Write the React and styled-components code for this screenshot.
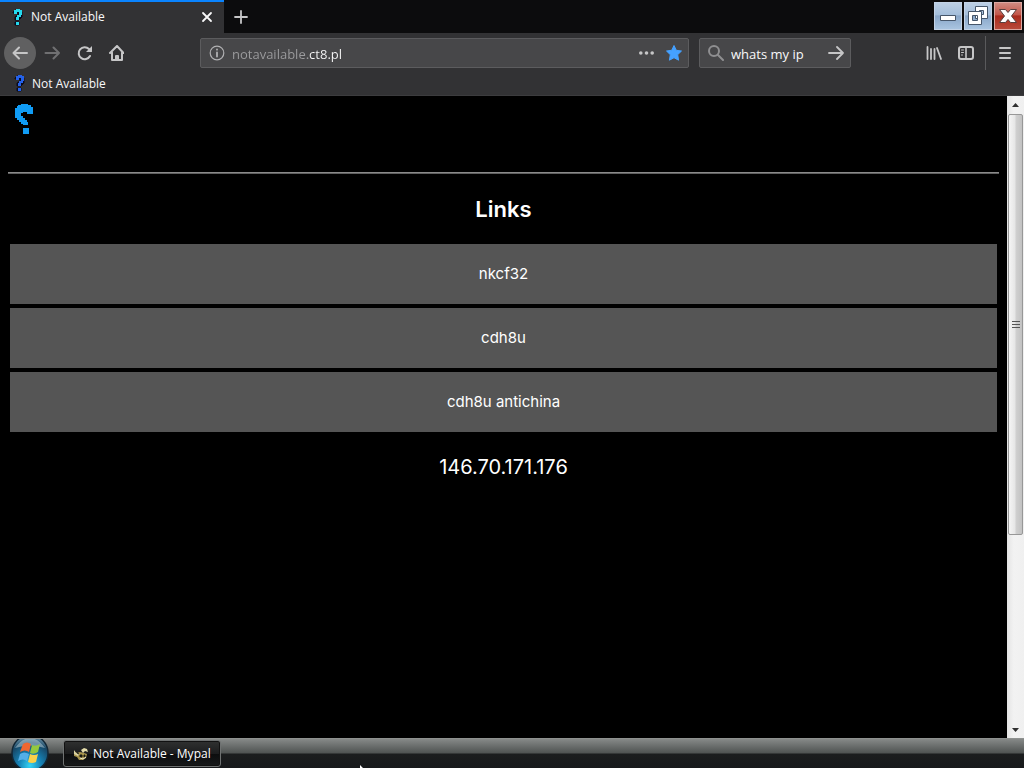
import React, { useState } from 'react';
import styled, { createGlobalStyle } from 'styled-components';

const GlobalStyle = createGlobalStyle`
  * {
    box-sizing: border-box;
  }

  body {
    margin: 0;
    background: #000;
    font-family: 'Open Sans', 'Noto Sans', sans-serif;
    font-size: 12px;
  }

  button,
  input {
    font-family: inherit;
  }
`;

const Desktop = styled.div`
  position: relative;
  display: flex;
  flex-direction: column;
  height: 100vh;
  overflow: hidden;
`;

const TabStrip = styled.header`
  display: flex;
  flex: none;
  height: 33px;
  background: #0c0c0d;
`;

const Tab = styled.div`
  display: flex;
  align-items: center;
  width: 224px;
  padding: 0 9px 2px;
  gap: 4px;
  border-top: 2px solid #0a84ff;
  background: #323234;
  color: #f9f9fa;
`;

const TabTitle = styled.span`
  flex: 1;
`;

const IconButton = styled.button`
  display: flex;
  flex: none;
  align-items: center;
  justify-content: center;
  width: ${(props) => props.$size || 32}px;
  height: ${(props) => props.$size || 32}px;
  padding: 0;
  border: 0;
  border-radius: ${(props) => (props.$round ? '50%' : '2px')};
  background: ${(props) => (props.$round ? '#606061' : 'transparent')};
  color: ${(props) => (props.disabled ? '#707072' : '#c6c6c7')};
`;

const WindowButtons = styled.div`
  display: flex;
  gap: 2px;
  margin-left: auto;
  padding: 2px 2px 0 0;
`;

const WindowButton = styled.button`
  display: flex;
  align-items: center;
  justify-content: center;
  width: 28px;
  height: 28px;
  padding: 0;
  border: 1px solid ${(props) => (props.$close ? '#dba8a2' : '#c3d3e6')};
  background: ${(props) =>
    props.$close
      ? 'linear-gradient(#cf8a80, #c2574a 45%, #a92a1c 50%, #b84a3a)'
      : 'linear-gradient(#bccfe4, #a4bedb 45%, #88a6c8 50%, #a9c4e0)'};
`;

const Toolbar = styled.nav`
  display: flex;
  flex: none;
  align-items: center;
  height: 40px;
  padding: 0 3px 0 4px;
  background: #323234;
`;

const Field = styled.form`
  display: flex;
  align-items: center;
  flex: ${(props) => props.$grow || 'none'};
  min-width: 0;
  height: 30px;
  padding: 0 6px 0 8px;
  gap: 7px;
  border: 1px solid #5c5c5e;
  border-radius: 2px;
  background: #474749;
  color: #b1b1b3;
`;

const TextInput = styled.input`
  flex: 1;
  min-width: 0;
  height: 28px;
  padding: 2px 0 0;
  border: 0;
  outline: 0;
  background: none;
  color: #f9f9fa;
  font-size: 13px;
`;

// the host is dimmed, the registered domain stays bright
const AddressInput = styled(TextInput)`
  background: linear-gradient(90deg, #9c9c9e 76px, #f9f9fa 76px);
  background-clip: text;
  color: transparent;
`;

const AddressArea = styled.div`
  display: flex;
  flex: 1;
  min-width: 0;
  gap: 10px;
  padding: 0 67px 0 68px;
`;

const Divider = styled.span`
  width: 1px;
  height: 34px;
  margin: 0 3px;
  background: #5a5a5c;
`;

const Bookmarks = styled.nav`
  display: flex;
  flex: none;
  align-items: center;
  height: 23px;
  padding: 0 11px 2px;
  border-bottom: 1px solid #3c3c3e;
  background: #323234;
`;

const Bookmark = styled.a`
  display: flex;
  align-items: center;
  gap: 3px;
  color: #f9f9fa;
  text-decoration: none;
`;

const Viewport = styled.div`
  display: flex;
  flex: 1;
  min-height: 0;
`;

const Page = styled.main`
  flex: 1;
  padding: 8px;
  background: #000;
  color: #fff;
  font-family: Inter, sans-serif;
  text-align: center;
`;

const PageHeader = styled.div`
  display: flex;
  height: 68px;
  padding-left: 7px;
`;

const Rule = styled.hr`
  height: 2px;
  margin: 0;
  border: 0;
  border-top: 1px solid #8a8a8a;
  background: #5f5f5f;
`;

const Heading = styled.h2`
  margin: 20px 0;
  font-size: 22px;
  font-weight: 600;
  line-height: 30px;
`;

const LinkList = styled.div`
  display: grid;
  gap: 4px;
  padding: 0 2px;
`;

const PageLink = styled.a`
  background: #555;
  color: #fff;
  font-size: 15px;
  line-height: 60px;
  text-decoration: none;
`;

const Address = styled.p`
  margin: 20px 0;
  font-size: 20px;
  line-height: 30px;
`;

const Scrollbar = styled.div`
  display: flex;
  flex: none;
  flex-direction: column;
  width: 17px;
  background: linear-gradient(90deg, #e4e4e4, #f2f2f2 40%, #f0f0f0);
`;

const ScrollButton = styled.button`
  display: flex;
  align-items: center;
  justify-content: center;
  height: 17px;
  padding: 0;
  border: 0;
  background: none;
`;

const Track = styled.div`
  flex: 1;
  padding: 1px;
`;

const Thumb = styled.div`
  display: flex;
  align-items: center;
  justify-content: center;
  height: calc(70% - 3px);
  border: 1px solid #979797;
  border-radius: 2px;
  background: linear-gradient(90deg, #f5f5f5, #e6e6e6 45%, #cfcfcf 55%, #c2c2c2);
`;

const Taskbar = styled.footer`
  display: flex;
  flex: none;
  align-items: flex-start;
  gap: 14px;
  height: 30px;
  padding-left: 11px;
  border-top: 1px solid #8e918f;
  background: linear-gradient(#868988, #4f5352 14px, #1b1d1e 15px, #17191b);
`;

const StartButton = styled.button`
  width: 38px;
  height: 29px;
  padding: 0;
  border: 0;
  overflow: hidden;
  background: none;
`;

const TaskButton = styled.button`
  display: flex;
  align-items: center;
  gap: 4px;
  height: 27px;
  width: 158px;
  margin-top: 1px;
  padding: 0 0 0 9px;
  border: 1px solid #6f7272;
  border-radius: 3px;
  background: linear-gradient(#303131, #1c1d1e 50%, #0c0d0e 52%, #17191a);
  box-shadow: inset 0 0 0 1px #111;
  color: #fff;
  font-size: 12px;
  white-space: nowrap;
`;

const Pointer = styled.svg`
  position: absolute;
  top: 765px;
  left: 360px;
`;

function QuestionMark({ width, height, color }) {
  return (
    <svg width={width} height={height} viewBox='0 0 18 30' preserveAspectRatio='none'>
      <path
        fill={color}
        d='M3 1h3V0h7v1h3v2h2v7h-6V8H8v1H6v3h2v2h2v2h2v2h1v3H8v-1H6v-2H4v-2H2v-2H0V4h2V2h1zM8 24h6v6H8z'
      />
    </svg>
  );
}

function TabMark({ color }) {
  return (
    <svg width='18' height='18' viewBox='0 0 18 18'>
      <path
        d='M4 4l2-2h5l2 2v5l-3 3H6V9l3-2V5H4zM6 14h4v3H6z'
        fill='#0b0b1c'
        stroke='#0b0b1c'
        strokeWidth='1'
      />
      <path d='M5 2h2V1h4v1h2v5h-1v2h-2v3H7V9h1V7h2V4H8v2H5zM7 14h3v3H7z' fill={color} />
    </svg>
  );
}

function Stroke({ size = 16, width = 2, children }) {
  return (
    <svg
      width={size}
      height={size}
      viewBox='0 0 16 16'
      fill='none'
      stroke='currentColor'
      strokeWidth={width}
      strokeLinecap='round'
      strokeLinejoin='round'
    >
      {children}
    </svg>
  );
}

function StartOrb() {
  return (
    <svg width='38' height='29' viewBox='0 0 38 29'>
      <defs>
        <radialGradient id='orb' cx='50%' cy='85%' r='85%'>
          <stop offset='0' stopColor='#35d4f4' />
          <stop offset='.35' stopColor='#1685b9' />
          <stop offset='.75' stopColor='#174665' />
          <stop offset='1' stopColor='#7fa5b8' />
        </radialGradient>
      </defs>
      <circle cx='19' cy='14' r='18' fill='url(#orb)' stroke='#122736' strokeWidth='1.5' />
      <path d='M4 9Q19-11 34 9Q19 4 4 9z' fill='#b7ced9' opacity='.55' />
      <path d='M12 5q4-3 8 0l-2 8q-4-3-9 0z' fill='#ee6631' />
      <path d='M21 6q4 2 8-1l-2 8q-4 3-8 1z' fill='#94c83e' />
      <path d='M9 15q4-3 9 0l-2 7q-4-3-9 0z' fill='#54aee8' />
      <path d='M19 15q4 2 8 0l-2 8q-4 2-8 0z' fill='#fbd04a' />
    </svg>
  );
}

function MypalIcon() {
  return (
    <svg width='16' height='14' viewBox='0 0 16 14'>
      <path d='M1 4l3 2 3-1 4 1 3 1-1 4-3 2H6l-2-3-3-1z' fill='#a8954c' />
      <path d='M8 3l3-2 3 1 1 3-3-1-2 2z' fill='#e3dba9' />
      <path d='M1 3l2 3 3 1-1 2-4-2z' fill='#d9d2a4' />
      <path d='M7 8h2v2H7zM11 8h1v2h-1zM4 6l2 1' fill='#1a1a12' stroke='#1a1a12' />
      <path d='M7 11l3 1 3-2' stroke='#f2ecc8' fill='none' />
    </svg>
  );
}

const links = ['nkcf32', 'cdh8u', 'cdh8u antichina'];

function App() {
  const [url, setUrl] = useState('notavailable.ct8.pl');
  const [search, setSearch] = useState('whats my ip');

  return (
    <>
      <GlobalStyle />
      <Desktop>
        <TabStrip>
          <Tab>
            <TabMark color='#24d9ee' />
            <TabTitle>Not Available</TabTitle>
            <IconButton $size={16} aria-label='Close tab'>
              <Stroke>
                <path d='M4 4l8 8M12 4l-8 8' stroke='#f9f9fa' strokeWidth='1.8' />
              </Stroke>
            </IconButton>
          </Tab>
          <IconButton $size={33} aria-label='New tab'>
            <Stroke width={1.8}>
              <path d='M8 2v12M2 8h12' />
            </Stroke>
          </IconButton>
          <WindowButtons>
            <WindowButton aria-label='Minimize'>
              <svg width='24' height='24'>
                <path d='M4.500 11.500h15v5h-15z' fill='#fff' stroke='#46566a' />
              </svg>
            </WindowButton>
            <WindowButton aria-label='Restore'>
              <svg width='24' height='24' stroke='#46566a' fill='#fff' fillRule='evenodd'>
                <path d='M9.500 2.500h12v12h-12zM13.500 6.500h4v4h-4z' />
                <path d='M2.500 7.500h13v13h-13zM6.500 11.500h5v5h-5z' />
              </svg>
            </WindowButton>
            <WindowButton $close aria-label='Close'>
              <svg width='24' height='24'>
                <path
                  d='M3.500 5.500h6l2.500 3 2.500-3h6l-5 6.500 5 6.500h-6l-2.500-3-2.500 3h-6l5-6.500z'
                  fill='#fff'
                  stroke='#57403f'
                />
              </svg>
            </WindowButton>
          </WindowButtons>
        </TabStrip>

        <Toolbar>
          <IconButton $round aria-label='Back'>
            <Stroke>
              <path d='M15 8H1.500M7 2.500L1.500 8 7 13.500' />
            </Stroke>
          </IconButton>
          <IconButton disabled aria-label='Forward'>
            <Stroke>
              <path d='M1.500 8H15M9.500 2.500L15 8l-5.500 5.500' />
            </Stroke>
          </IconButton>
          <IconButton aria-label='Reload'>
            <Stroke>
              <path d='M14 11A6 6 0 1 1 13 4' />
              <path d='M16 1v6h-6z' fill='currentColor' stroke='none' />
            </Stroke>
          </IconButton>
          <IconButton aria-label='Home'>
            <Stroke>
              <path d='M2 8l7-7 6.500 7M4 7.500V15h10V7.500' />
              <path d='M8 15v-4h2v4' />
            </Stroke>
          </IconButton>
          <AddressArea>
            <Field $grow='1'>
              <Stroke width={1.2}>
                <circle cx='8' cy='8' r='6.800' />
                <path d='M8 7.500v4M8 4.500v.2' strokeWidth='1.8' />
              </Stroke>
              <AddressInput
                aria-label='Address'
                value={url}
                onChange={(e) => setUrl(e.target.value)}
              />
              <IconButton type='button' $size={24} aria-label='Page actions'>
                <svg width='16' height='16' fill='currentColor'>
                  <circle cx='1.800' cy='8' r='1.800' />
                  <circle cx='7.500' cy='8' r='1.800' />
                  <circle cx='13.200' cy='8' r='1.800' />
                </svg>
              </IconButton>
              <IconButton type='button' $size={16} aria-label='Bookmark this page'>
                <svg width='16' height='16' viewBox='0 0 16 16'>
                  <path
                    d='M8 0.500l2.300 4.800 5.200.7-3.800 3.700.9 5.500L8 12.700l-4.600 2.500.9-5.500L.5 6l5.200-.7z'
                    fill='#45a1ff'
                    stroke='#45a1ff'
                    strokeLinejoin='round'
                  />
                </svg>
              </IconButton>
            </Field>
            <Field>
              <Stroke>
                <circle cx='6' cy='6' r='5' stroke='#8f8f91' />
                <path d='M10 10l5 5' stroke='#8f8f91' />
              </Stroke>
              <TextInput
                aria-label='Search'
                size='10'
                value={search}
                onChange={(e) => setSearch(e.target.value)}
              />
              <IconButton $size={16} aria-label='Search the web'>
                <Stroke width={1.8}>
                  <path d='M1 8h14M9 2l6 6-6 6' />
                </Stroke>
              </IconButton>
            </Field>
          </AddressArea>
          <IconButton aria-label='Library'>
            <Stroke>
              <path d='M1.500 2v12M5 4v10M8.500 4v10M11 3l4 11' strokeWidth='1.8' />
            </Stroke>
          </IconButton>
          <IconButton aria-label='Sidebars'>
            <Stroke>
              <rect x='1' y='2' width='14' height='12' rx='2' />
              <path d='M8 2v12' strokeWidth='1.600' />
              <path d='M3.500 5h2M3.500 7.500h2M3.500 10h1' strokeWidth='1' />
            </Stroke>
          </IconButton>
          <Divider />
          <IconButton aria-label='Menu'>
            <Stroke>
              <path d='M3 3h10M3 8h10M3 13h10' />
            </Stroke>
          </IconButton>
        </Toolbar>

        <Bookmarks>
          <Bookmark href='#home'>
            <TabMark color='#2461e8' />
            Not Available
          </Bookmark>
        </Bookmarks>

        <Viewport>
          <Page>
            <PageHeader>
              <QuestionMark width='18' height='30' color='#109cf5' />
            </PageHeader>
            <Rule />
            <Heading>Links</Heading>
            <LinkList>
              {links.map((link) => (
                <PageLink key={link} href={`#${link}`}>
                  {link}
                </PageLink>
              ))}
            </LinkList>
            <Address>146.70.171.176</Address>
          </Page>
          <Scrollbar>
            <ScrollButton aria-label='Scroll up'>
              <svg width='7' height='4'>
                <path d='M0 4l3.500-4L7 4z' fill='#303030' />
              </svg>
            </ScrollButton>
            <Track>
              <Thumb>
                <svg width='8' height='9' stroke='#555'>
                  <path d='M0 1.500h8M0 4.500h8M0 7.500h8' />
                </svg>
              </Thumb>
            </Track>
            <ScrollButton aria-label='Scroll down'>
              <svg width='7' height='4'>
                <path d='M0 0l3.500 4L7 0z' fill='#303030' />
              </svg>
            </ScrollButton>
          </Scrollbar>
        </Viewport>

        <Taskbar>
          <StartButton aria-label='Start'>
            <StartOrb />
          </StartButton>
          <TaskButton>
            <MypalIcon />
            Not Available - Mypal
          </TaskButton>
        </Taskbar>

        <Pointer width='12' height='19'>
          <path d='M0 0v17l4-4 3 6 2-1-3-6h6z' fill='#fff' />
        </Pointer>
      </Desktop>
    </>
  );
}

export default App;
